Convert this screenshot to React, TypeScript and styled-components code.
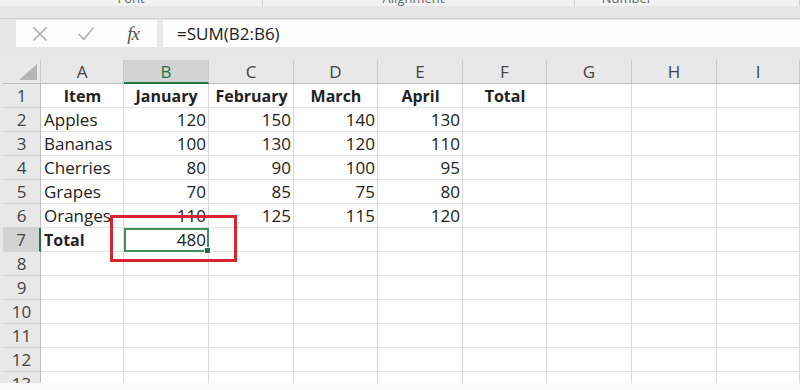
import React from "react";
import styled, { createGlobalStyle } from "styled-components";

const Global = createGlobalStyle`
  html, body { margin: 0; padding: 0; background: #e7e7e7; }
  body { font-family: "Open Sans", "Liberation Sans", sans-serif; width: 800px; height: 390px; overflow: hidden; }
`;

const Page = styled.div`
  width: 800px;
  height: 390px;
  display: flex;
  flex-direction: column;
  background: #e7e7e7;
  overflow: hidden;
`;

const Ribbon = styled.div`
  height: 18px;
  flex: none;
  display: grid;
  grid-template-columns: 263px 312px 1fr;
  background: linear-gradient(#f2f2f2 0 6px, #e6e6e6 6px);
  border-bottom: 1px solid #d2d2d2;
  overflow: hidden;
`;

const RibbonGroup = styled.div`
  border-right: 1px solid #d4d4d4;
  display: flex;
  justify-content: center;
  overflow: hidden;
  height: 7px;
`;

const RibbonLabel = styled.span<{ $shift: number }>`
  font-size: 13px;
  color: #666;
  line-height: 13px;
  margin-top: -8px;
  margin-left: ${(p) => p.$shift}px;
`;

const FormulaArea = styled.div`
  display: flex;
  flex: none;
  gap: 6px;
  padding: 1px 0 0 16px;
  height: 27px;
  margin-bottom: 13px;
`;

const IconBox = styled.div`
  width: 141px;
  background: #fdfdfd;
  position: relative;
`;

const IconSlot = styled.span<{ $x: number }>`
  position: absolute;
  left: ${(p) => p.$x}px;
  top: 50%;
  transform: translate(-50%, -50%);
  display: flex;
`;

const Fx = styled.span`
  font-family: "Liberation Serif", serif;
  font-style: italic;
  font-size: 19px;
  color: #555;
  letter-spacing: -1px;
`;

const FormulaInput = styled.div`
  flex: 1;
  background: #fdfdfd;
  display: flex;
  align-items: center;
  padding-left: 14px;
  font-size: 17px;
  color: #222;
`;

const SheetWrap = styled.div`
  position: relative;
  flex: none;
  margin-left: 3px;
  height: 323px;
  overflow: hidden;
`;

const BottomFill = styled.div`
  flex: 1;
  background: #fafafa;
`;

const Grid = styled.div`
  display: grid;
  grid-template-columns: 38px 83px 85px 85px 84px 85px 84px 85px 85px 1fr;
  grid-auto-rows: 24px;
  background: #fff;
`;

const Corner = styled.div`
  background: #e8e8e8;
  border-right: 1px solid #c9c9c9;
  border-bottom: 1px solid #bdbdbd;
  position: relative;
`;

const ColHead = styled.div<{ $active?: boolean }>`
  background: ${(p) => (p.$active ? "#d3d3d3" : "#e8e8e8")};
  border-right: 1px solid #c9c9c9;
  border-bottom: ${(p) => (p.$active ? "2px solid #217346" : "1px solid #bdbdbd")};
  color: ${(p) => (p.$active ? "#217346" : "#444")};
  font-size: 17px;
  display: flex;
  align-items: center;
  justify-content: center;
`;

const RowHead = styled.div<{ $active?: boolean }>`
  background: ${(p) => (p.$active ? "#d3d3d3" : "#e8e8e8")};
  border-right: ${(p) => (p.$active ? "2px solid #217346" : "1px solid #bdbdbd")};
  border-bottom: 1px solid #d4d4d4;
  color: #444;
  font-size: 17px;
  display: flex;
  align-items: center;
  justify-content: center;
`;

const Cell = styled.div<{ $align?: string; $bold?: boolean; $selected?: boolean }>`
  border-right: 1px solid #d9d9d9;
  border-bottom: 1px solid #e3e3e3;
  font-size: ${(p) => (p.$bold ? "16px" : "17px")};
  color: #222;
  font-weight: ${(p) => (p.$bold ? 700 : 400)};
  display: flex;
  align-items: center;
  justify-content: ${(p) => p.$align || "flex-start"};
  padding: 0 2px 0 3px;
  white-space: nowrap;
  position: relative;
  ${(p) =>
    p.$selected &&
    `
    outline: 2px solid #3f8f61;
    outline-offset: -2px;
    z-index: 2;
  `}
`;

const FillHandle = styled.span`
  position: absolute;
  right: -3px;
  bottom: -3px;
  width: 5px;
  height: 5px;
  background: #217346;
  border: 1px solid #fff;
`;

const Highlight = styled.div`
  position: absolute;
  left: 107px;
  top: 155px;
  width: 121px;
  height: 41px;
  border: 3px solid #d9232f;
  pointer-events: none;
  z-index: 3;
`;

const cols = ["A", "B", "C", "D", "E", "F", "G", "H", "I"];

type Row = (string | number)[];
const data: Row[] = [
  ["Item", "January", "February", "March", "April", "Total"],
  ["Apples", 120, 150, 140, 130],
  ["Bananas", 100, 130, 120, 110],
  ["Cherries", 80, 90, 100, 95],
  ["Grapes", 70, 85, 75, 80],
  ["Oranges", 110, 125, 115, 120],
  ["Total", 480],
];

export default function App() {
  const rows: React.ReactNode[] = [];
  for (let r = 0; r < 13; r++) {
    const rowData = data[r] || [];
    const activeRow = r === 6;
    rows.push(
      <RowHead key={`rh${r}`} $active={activeRow}>
        {r + 1}
      </RowHead>
    );
    for (let c = 0; c < 9; c++) {
      const v = rowData[c];
      const isHeader = r === 0;
      const isNum = typeof v === "number";
      const selected = r === 6 && c === 1;
      rows.push(
        <Cell
          key={`c${r}-${c}`}
          $align={isHeader ? "center" : isNum ? "flex-end" : "flex-start"}
          $bold={isHeader || (r === 6 && c === 0)}
          $selected={selected}
        >
          {v ?? ""}
          {selected && <FillHandle />}
        </Cell>
      );
    }
  }

  return (
    <Page>
      <Global />
      <Ribbon>
        <RibbonGroup>
          <RibbonLabel $shift={0}>Font</RibbonLabel>
        </RibbonGroup>
        <RibbonGroup>
          <RibbonLabel $shift={-10}>Alignment</RibbonLabel>
        </RibbonGroup>
        <RibbonGroup>
          <RibbonLabel $shift={-120}>Number</RibbonLabel>
        </RibbonGroup>
      </Ribbon>
      <FormulaArea>
        <IconBox>
          <IconSlot $x={24}>
            <svg width="15" height="15" viewBox="0 0 14 14">
              <path d="M1 1 L13 13 M13 1 L1 13" stroke="#a8a8a8" strokeWidth="1.4" fill="none" />
            </svg>
          </IconSlot>
          <IconSlot $x={70}>
            <svg width="17" height="15" viewBox="0 0 16 14">
              <path d="M1 7 L6 12 L15 1" stroke="#a8a8a8" strokeWidth="1.4" fill="none" />
            </svg>
          </IconSlot>
          <IconSlot $x={117}>
            <Fx>fx</Fx>
          </IconSlot>
        </IconBox>
        <FormulaInput>=SUM(B2:B6)</FormulaInput>
      </FormulaArea>
      <SheetWrap>
        <Grid>
          <Corner>
            <svg
              width="18"
              height="16"
              viewBox="0 0 18 16"
              style={{ position: "absolute", right: 3, bottom: 3 }}
            >
              <path d="M18 0 L18 16 L0 16 Z" fill="#b5b5b5" />
            </svg>
          </Corner>
          {cols.map((c) => (
            <ColHead key={c} $active={c === "B"}>
              {c}
            </ColHead>
          ))}
          {rows}
        </Grid>
        <Highlight />
      </SheetWrap>
      <BottomFill />
    </Page>
  );
}
